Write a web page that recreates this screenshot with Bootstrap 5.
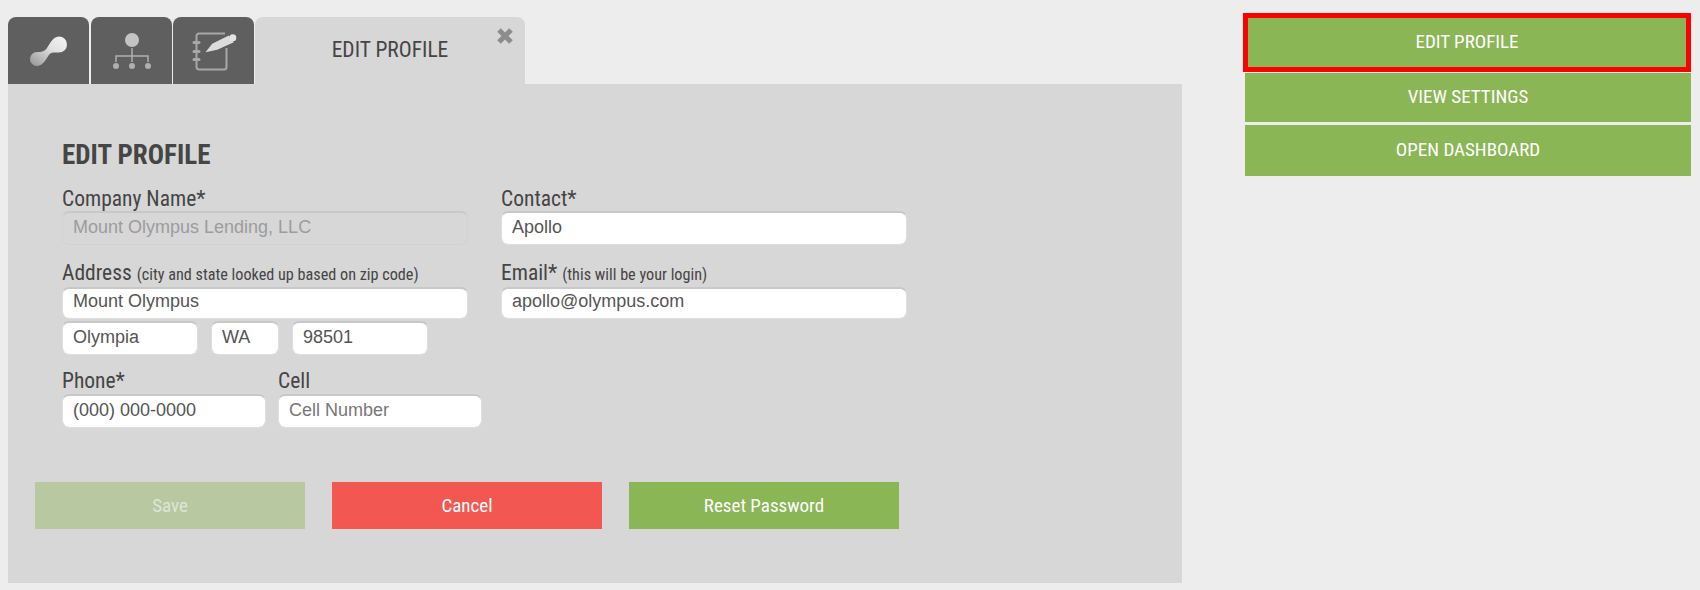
<!DOCTYPE html>
<html lang="en">
<head>
    <meta charset="UTF-8">
    <meta name="viewport" content="width=device-width, initial-scale=1.0">
    <title>Edit Profile</title>
    <link href="https://cdn.jsdelivr.net/npm/bootstrap@5.3.0/dist/css/bootstrap.min.css" rel="stylesheet">
    <style>
        body {
            background-color: #ededed;
            color: #4a4a4a;
            font-family: "Roboto", "Liberation Sans", sans-serif;
            font-stretch: 75%;
        }
        .page-wrap { width: 1700px; height: 590px; padding-left: 8px; }
        .left-col { width: 1174px; padding-top: 17px; }
        .right-col { width: 446px; margin-left: 63px; padding-top: 13px; }

        .tab-icon {
            width: 81px;
            height: 67px;
            margin-right: 1px;
            background-color: #5f5f5f;
            border-radius: 8px 8px 0 0;
        }
        .tab-icon:first-child { margin-right: 2px; }
        .tab-active {
            position: relative;
            width: 270px;
            height: 67px;
            background-color: #d7d7d7;
            border-radius: 8px 8px 0 0;
            font-size: 21.5px;
            color: #454545;
        }
        .tab-close { position: absolute; top: 10px; right: 11px; }

        .edit-panel {
            height: 499px;
            background-color: #d7d7d7;
            padding: 56px 27px 0;
        }
        .panel-title {
            margin: 0 0 16px 27px;
            font-size: 27px;
            line-height: 30px;
            font-weight: 700;
            color: #454545;
        }
        .form-area { padding-left: 27px; }
        .field-label {
            display: block;
            height: 25px;
            font-size: 21.5px;
            line-height: 25px;
            color: #454545;
            white-space: nowrap;
        }
        .field-label small { font-size: 16.2px; }
        .label-up { line-height: 22px; }
        .label-up-sm { line-height: 23px; }
        .fld.form-control {
            display: block;
            height: 34px;
            padding: 0 10px 3px;
            border: 1px solid #dedede;
            border-top: 2px solid #c8c8c8;
            border-radius: 7px;
            box-shadow: none;
            background-color: #fff;
            font-family: "Liberation Sans", Arial, sans-serif;
            font-stretch: 100%;
            font-size: 18px;
            color: #555;
        }
        .fld.form-control::placeholder { color: #777; opacity: 1; }
        .fld.form-control:disabled {
            background-color: #d7d7d7;
            border-color: #d2d2d2;
            border-top-color: #c8c8c8;
            color: #9c9c9c;
        }
        .fld-slim.form-control { height: 32px; padding-bottom: 5px; }
        .w-wide { width: 406px; }
        .w-city { width: 136px; }
        .w-state { width: 68px; }
        .w-zip { width: 136px; }
        .w-phone { width: 204px; }
        .col-gap { column-gap: 33px; }
        .field-block { margin-bottom: 17px; }
        .address-row { margin-top: 2px; gap: 13px; }
        .phone-row { gap: 12px; margin-top: -3px; }

        .act-btn.btn {
            width: 270px;
            height: 47px;
            padding: 1px 0 0;
            border: 0;
            border-radius: 0;
            font-stretch: 75%;
            font-size: 19px;
            font-weight: 400;
            color: #fff;
        }
        .act-row { margin-top: 54px; gap: 27px; }
        .act-save.btn:disabled { background-color: #b8c9a2; color: #dfe5d6; opacity: 1; }
        .act-cancel.btn { background-color: #f25752; }
        .act-green.btn { background-color: #8ab656; }

        .side-btn.btn {
            display: block;
            width: 446px;
            height: 49px;
            padding: 0 0 1px;
            border: 0;
            border-radius: 0;
            background-color: #8ab656;
            color: #fff;
            font-stretch: 75%;
            font-size: 19px;
            font-weight: 400;
        }
        .side-first.btn {
            width: 448px;
            height: 59px;
            margin: 0 0 1px -2px;
            padding: 0;
            border: 5px solid #f00;
        }
        .side-last.btn { height: 51px; margin-top: 3px; }
    </style>
</head>
<body>
    <div class="page-wrap d-flex">
        <div class="left-col">
            <div class="d-flex">
                <div class="tab-icon d-flex align-items-center justify-content-center">
                    <svg width="40" height="30" viewBox="0 0 40 30">
                        <defs>
                            <linearGradient id="blob" x1="1" y1="0" x2="0" y2="1">
                                <stop offset="0" stop-color="#f4f4f4"/>
                                <stop offset="0.4" stop-color="#e2e2e2"/>
                                <stop offset="1" stop-color="#949494"/>
                            </linearGradient>
                        </defs>
                        <path d="M30 .5a8 8 0 0 1 0 16C26 16.500 23 16 20.700 18 18 20.500 15 30 8 30a7 7 0 0 1 0-14C12 16 15 15.500 17.300 13 20 10 23 .5 30 .5z" fill="url(#blob)"/>
                    </svg>
                </div>
                <div class="tab-icon d-flex align-items-center justify-content-center">
                    <svg width="44" height="44" viewBox="0 0 44 44">
                        <circle cx="22" cy="11" r="7" fill="#c4c4c4"/>
                        <path d="M22 19v14M6 33v-6h32v6" fill="none" stroke="#b0b0b0" stroke-width="1.500"/>
                        <g fill="#b0b0b0">
                            <circle cx="6" cy="37" r="3"/>
                            <circle cx="22" cy="37" r="3"/>
                            <circle cx="38" cy="37" r="3"/>
                        </g>
                    </svg>
                </div>
                <div class="tab-icon d-flex align-items-center justify-content-center">
                    <svg width="50" height="44" viewBox="0 0 50 44">
                        <path d="M36 4.500H10a2.500 2.500 0 0 0-2.500 2.500V38a2.500 2.500 0 0 0 2.500 2.500h25a2.500 2.500 0 0 0 2.500-2.500V19" fill="none" stroke="#a8a8a8" stroke-width="2"/>
                        <g fill="#a8a8a8">
                            <rect x="3.500" y="12" width="8" height="3" rx="1.500"/>
                            <rect x="3.500" y="21" width="8" height="3" rx="1.500"/>
                            <rect x="3.500" y="29" width="8" height="3" rx="1.500"/>
                        </g>
                        <path d="M14 25l8-12 18-9 7 9-18 10z" fill="#5f5f5f"/>
                        <path d="M16.500 23.200l6.700-8.400 16.600-8.300 5 6.700-16.600 7.600z" fill="#dcdcdc"/>
                        <circle cx="43.800" cy="8.800" r="3.500" fill="#e4e4e4"/>
                    </svg>
                </div>
                <div class="tab-active d-flex align-items-center justify-content-center">
                    EDIT PROFILE
                    <svg class="tab-close" width="18" height="18" viewBox="0 0 18 18">
                        <path d="M3 3l12 12M15 3L3 15" stroke="#8c8c8c" stroke-width="5"/>
                    </svg>
                </div>
            </div>
            <div class="edit-panel">
                <h2 class="panel-title">EDIT PROFILE</h2>
                <form class="form-area">
                    <div class="d-flex col-gap">
                        <div>
                            <div class="field-block">
                                <label class="field-label">Company Name*</label>
                                <input class="form-control fld w-wide" type="text" value="Mount Olympus Lending, LLC" disabled>
                            </div>
                            <div class="field-block">
                                <label class="field-label label-up">Address <small>(city and state looked up based on zip code)</small></label>
                                <input class="form-control fld fld-slim w-wide" type="text" value="Mount Olympus">
                                <div class="d-flex address-row">
                                    <input class="form-control fld w-city" type="text" value="Olympia">
                                    <input class="form-control fld w-state" type="text" value="WA">
                                    <input class="form-control fld w-zip" type="text" value="98501">
                                </div>
                            </div>
                        </div>
                        <div>
                            <div class="field-block">
                                <label class="field-label">Contact*</label>
                                <input class="form-control fld w-wide" type="text" value="Apollo">
                            </div>
                            <div class="field-block">
                                <label class="field-label label-up">Email* <small>(this will be your login)</small></label>
                                <input class="form-control fld fld-slim w-wide" type="email" value="apollo@olympus.com">
                            </div>
                        </div>
                    </div>
                    <div class="d-flex phone-row">
                        <div>
                            <label class="field-label label-up-sm">Phone*</label>
                            <input class="form-control fld w-phone" type="text" value="(000) 000-0000">
                        </div>
                        <div>
                            <label class="field-label label-up-sm">Cell</label>
                            <input class="form-control fld w-phone" type="text" placeholder="Cell Number">
                        </div>
                    </div>
                </form>
                <div class="d-flex act-row">
                    <button class="btn act-btn act-save" type="button" disabled>Save</button>
                    <button class="btn act-btn act-cancel" type="button">Cancel</button>
                    <button class="btn act-btn act-green" type="button">Reset Password</button>
                </div>
            </div>
        </div>
        <div class="right-col">
            <button class="btn side-btn side-first" type="button">EDIT PROFILE</button>
            <button class="btn side-btn" type="button">VIEW SETTINGS</button>
            <button class="btn side-btn side-last" type="button">OPEN DASHBOARD</button>
        </div>
    </div>

    <script src="https://cdn.jsdelivr.net/npm/bootstrap@5.3.0/dist/js/bootstrap.bundle.min.js"></script>
</body>
</html>
